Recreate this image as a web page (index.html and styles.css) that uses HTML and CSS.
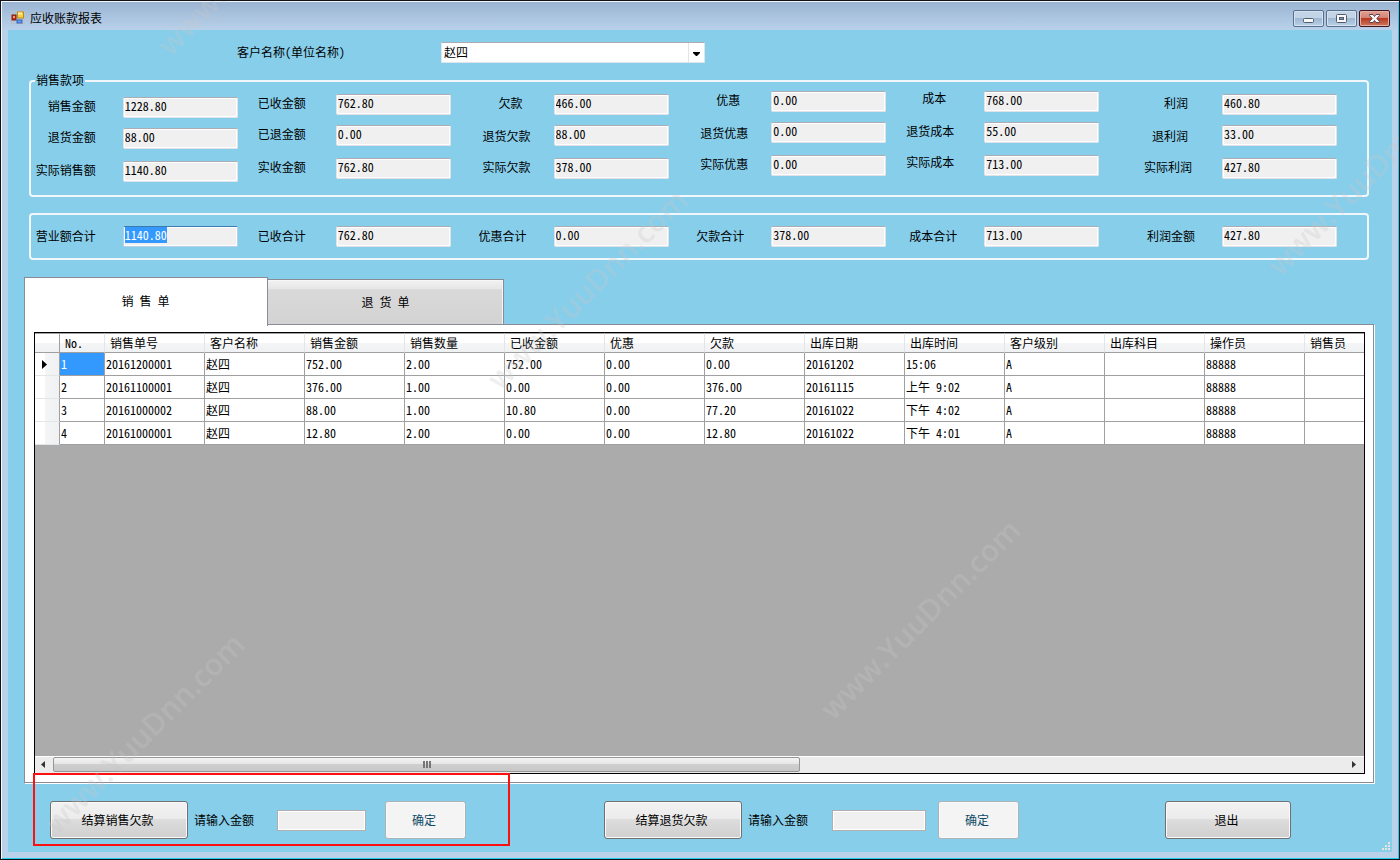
FILE: index.html
```html
<!DOCTYPE html>
<html lang="zh-CN">
<head>
<meta charset="utf-8">
<title>应收账款报表</title>
<link rel="stylesheet" href="styles.css">
</head>
<body>
<div class="window">
  <header class="titlebar">
    <svg class="app-icon" width="14" height="14" viewBox="0 0 14 14" aria-hidden="true">
      <rect x="0.5" y="0.5" width="13" height="12" fill="none" stroke="#b9c2cb"/>
      <rect x="6.500" y="1" width="6" height="6" fill="#f7d046" stroke="#c08a10"/>
      <rect x="7" y="1.500" width="4" height="2" fill="#fdf0a8"/>
      <rect x="1" y="4" width="4" height="5" fill="#b8341c" stroke="#8a1a08"/>
      <rect x="2" y="5" width="2" height="2" fill="#ef9a80"/>
      <rect x="6" y="9" width="5" height="3" fill="#6d9bea" stroke="#3562b8"/>
    </svg>
    <h1 class="title">应收账款报表</h1>
    <div class="window-buttons">
      <button class="winbtn" type="button" aria-label="最小化">
        <svg width="29" height="15" viewBox="0 0 29 15"><rect x="9.500" y="7.500" width="10" height="4" rx="1" fill="#f6f8fa" stroke="#535c68"/></svg>
      </button>
      <button class="winbtn" type="button" aria-label="最大化">
        <svg width="29" height="15" viewBox="0 0 29 15"><rect x="9.500" y="3.500" width="10" height="8" rx="1" fill="#f6f8fa" stroke="#535c68"/><rect x="12.500" y="6.500" width="4" height="2" fill="#7d97b4" stroke="#535c68"/></svg>
      </button>
      <button class="winbtn winbtn-close" type="button" aria-label="关闭">
        <svg width="29" height="15" viewBox="0 0 29 15"><path d="M9.500 3.500h3.500l1.500 2 1.500-2h3.500v1l-2.700 3 2.700 3v1H16l-1.500-2-1.500 2H9.500v-1l2.700-3-2.700-3z" fill="#f6f6f6" stroke="#5a4450"/></svg>
      </button>
    </div>
  </header>

  <main class="client">
    <div class="filter">
      <label for="customer">客户名称(单位名称)</label>
      <div class="combo">
        <select id="customer"><option>赵四</option></select>
        <span class="combo-arrow"><svg width="7" height="4" viewBox="0 0 7 4"><path d="M0 0h7v1L4 4H3L0 1z" fill="#000"/></svg></span>
      </div>
    </div>

    <fieldset class="group">
      <legend>销售款项</legend>
      <div class="columns">
        <div class="column drop-2">
          <label for="a1">销售金额</label><input id="a1" value="1228.80" readonly>
          <label for="a2">退货金额</label><input id="a2" value="88.00" readonly>
          <label for="a3">实际销售额</label><input id="a3" value="1140.80" readonly>
        </div>
        <div class="column drop-1 gap-wide">
          <label for="b1">已收金额</label><input id="b1" value="762.80" readonly>
          <label for="b2">已退金额</label><input id="b2" value="0.00" readonly>
          <label for="b3">实收金额</label><input id="b3" value="762.80" readonly>
        </div>
        <div class="column drop-1 gap-narrow low-middle">
          <label class="short" for="c1">欠款</label><input id="c1" value="466.00" readonly>
          <label class="middle" for="c2">退货欠款</label><input id="c2" value="88.00" readonly>
          <label for="c3">实际欠款</label><input id="c3" value="378.00" readonly>
        </div>
        <div class="column gap-narrow low-middle">
          <label class="short" for="d1">优惠</label><input id="d1" value="0.00" readonly>
          <label class="middle" for="d2">退货优惠</label><input id="d2" value="0.00" readonly>
          <label for="d3">实际优惠</label><input id="d3" value="0.00" readonly>
        </div>
        <div class="column gap-wide high">
          <label class="short" for="e1">成本</label><input id="e1" value="768.00" readonly>
          <label class="middle" for="e2">退货成本</label><input id="e2" value="55.00" readonly>
          <label for="e3">实际成本</label><input id="e3" value="713.00" readonly>
        </div>
        <div class="column drop-1 gap-wide low-middle">
          <label class="inset" for="f1">利润</label><input id="f1" value="460.80" readonly>
          <label class="middle inset" for="f2">退利润</label><input id="f2" value="33.00" readonly>
          <label for="f3">实际利润</label><input id="f3" value="427.80" readonly>
        </div>
      </div>
    </fieldset>

    <fieldset class="group group-total" aria-label="合计">
      <div class="columns">
        <div class="column"><label for="t1">营业额合计</label><input id="t1" class="current" value="1140.80" readonly></div>
        <div class="column gap-wide"><label for="t2">已收合计</label><input id="t2" value="762.80" readonly></div>
        <div class="column"><label for="t3">优惠合计</label><input id="t3" value="0.00" readonly></div>
        <div class="column"><label for="t4">欠款合计</label><input id="t4" value="378.00" readonly></div>
        <div class="column"><label for="t5">成本合计</label><input id="t5" value="713.00" readonly></div>
        <div class="column"><label for="t6">利润金额</label><input id="t6" value="427.80" readonly></div>
      </div>
    </fieldset>

    <section class="tabs">
      <div class="tablist" role="tablist">
        <button class="tab tab-active" type="button" role="tab" aria-selected="true">销 售 单</button>
        <button class="tab" type="button" role="tab" aria-selected="false">退 货 单</button>
      </div>
      <div class="panel" role="tabpanel">
        <div class="datagrid">
          <div class="viewport">
            <table>
              <colgroup><col class="c-mark"><col class="c-no"><col span="13"></colgroup>
              <thead>
                <tr><th></th><th>No.</th><th>销售单号</th><th>客户名称</th><th>销售金额</th><th>销售数量</th><th>已收金额</th><th>优惠</th><th>欠款</th><th>出库日期</th><th>出库时间</th><th>客户级别</th><th>出库科目</th><th>操作员</th><th>销售员</th></tr>
              </thead>
              <tbody>
                <tr><th><svg width="5" height="9" viewBox="0 0 5 9"><path d="M0 0l5 4.500L0 9z" fill="#000"/></svg></th><td class="selected">1</td><td>20161200001</td><td>赵四</td><td>752.00</td><td>2.00</td><td>752.00</td><td>0.00</td><td>0.00</td><td>20161202</td><td>15:06</td><td>A</td><td></td><td>88888</td><td></td></tr>
                <tr><th></th><td>2</td><td>20161100001</td><td>赵四</td><td>376.00</td><td>1.00</td><td>0.00</td><td>0.00</td><td>376.00</td><td>20161115</td><td>上午 9:02</td><td>A</td><td></td><td>88888</td><td></td></tr>
                <tr><th></th><td>3</td><td>20161000002</td><td>赵四</td><td>88.00</td><td>1.00</td><td>10.80</td><td>0.00</td><td>77.20</td><td>20161022</td><td>下午 4:02</td><td>A</td><td></td><td>88888</td><td></td></tr>
                <tr><th></th><td>4</td><td>20161000001</td><td>赵四</td><td>12.80</td><td>2.00</td><td>0.00</td><td>0.00</td><td>12.80</td><td>20161022</td><td>下午 4:01</td><td>A</td><td></td><td>88888</td><td></td></tr>
              </tbody>
            </table>
          </div>
          <div class="scrollbar">
            <button class="scroll-arrow" type="button" aria-label="向左滚动"><svg width="4" height="7" viewBox="0 0 4 7"><path d="M4 0v7L0 3.500z" fill="#333"/></svg></button>
            <div class="track"><div class="thumb"><i></i><i></i><i></i></div></div>
            <button class="scroll-arrow" type="button" aria-label="向右滚动"><svg width="4" height="7" viewBox="0 0 4 7"><path d="M0 0v7l4-3.500z" fill="#333"/></svg></button>
          </div>
        </div>
      </div>
    </section>

    <footer class="actions">
      <div class="settle">
        <button class="btn btn-settle" type="button">结算销售欠款</button>
        <label for="pay1">请输入金额</label>
        <input id="pay1" class="amount" disabled>
        <button class="btn btn-ok" type="button" disabled>确定</button>
      </div>
      <div class="settle">
        <button class="btn btn-settle" type="button">结算退货欠款</button>
        <label for="pay2">请输入金额</label>
        <input id="pay2" class="amount amount-wide" disabled>
        <button class="btn btn-ok btn-near" type="button" disabled>确定</button>
      </div>
      <div class="settle"><button class="btn btn-exit" type="button">退出</button></div>
    </footer>
    <svg class="grip" width="9" height="9" viewBox="0 0 9 9" aria-hidden="true"><path d="M6 0h2v2H6zM3 3h2v2H3zM6 3h2v2H6zM0 6h2v2H0zM3 6h2v2H3zM6 6h2v2H6z" fill="#e8e4df"/></svg>
  </main>

  <div class="callout"></div>
  <span class="mark mark-1">www.YuuDnn.com</span>
  <span class="mark mark-2">www.YuuDnn.com</span>
  <span class="mark mark-3">www.YuuDnn.com</span>
  <span class="mark mark-4">www.YuuDnn.com</span>
  <span class="mark mark-5">www.YuuDnn.com</span>
</div>
<script src="main.js"></script>
</body>
</html>
```
FILE: styles.css
```css
* {
  box-sizing: border-box;
}

body,
button,
input,
select {
  margin: 0;
  font-family: "Noto Sans Mono CJK SC", "Noto Sans CJK SC", sans-serif;
  font-feature-settings: "hwid";
  font-size: 12px;
  line-height: 18px;
  color: #000;
}

.window {
  position: relative;
  display: flex;
  flex-direction: column;
  min-height: 100vh;
  overflow: hidden;
  border: 1px solid #101418;
  background: #bad1ea;
  box-shadow: inset 1px 1px 0 #f4f8fc, inset -1px -1px 0 #22ccee;
}

/* Title bar */
.titlebar {
  display: flex;
  align-items: center;
  height: 29px;
  margin: 0 1px;
  padding: 4px 8px 0 9px;
  background: linear-gradient(#9ab4d2, #b9d1ea);
  border-top: 1px solid #f4f8fc;
}

.title {
  flex: 1;
  margin: 0 0 0 5px;
  font-size: 12px;
  font-weight: 400;
}

.window-buttons {
  display: flex;
  gap: 2px;
}

.winbtn {
  width: 31px;
  height: 17px;
  padding: 0;
  border: 1px solid #5a6f8c;
  border-radius: 2px;
  background: linear-gradient(#c3d4e7 50%, #9fb8d3 50%, #b9d0e8);
  box-shadow: inset 0 0 0 1px #d5e3f1;
}

.winbtn-close {
  border-color: #43141c;
  background: linear-gradient(#e0a094, #d3806f 50%, #b83a20 50%, #cf7760);
  box-shadow: inset 0 0 0 1px #e3b0a6;
}

.winbtn svg {
  display: block;
}

/* Client area */
.client {
  position: relative;
  flex: 1;
  display: flex;
  flex-direction: column;
  margin: 0 7px 7px;
  padding: 12px 16px 13px;
  background: #87ceeb;
}

.filter {
  display: flex;
  align-items: center;
  gap: 96px;
  padding-left: 213px;
}

.filter label {
  padding-bottom: 2px;
}

.combo {
  position: relative;
  width: 264px;
}

.combo select {
  display: block;
  width: 100%;
  height: 21px;
  padding: 0 18px 3px 2px;
  appearance: none;
  border: 1px solid #dfe5ea;
  border-top-color: #abadb3;
  border-radius: 1px;
  background: #fff;
}

.combo-arrow {
  position: absolute;
  top: 1px;
  right: 1px;
  bottom: 1px;
  display: flex;
  align-items: center;
  justify-content: center;
  width: 16px;
  padding-top: 2px;
  border-left: 1px solid #dfe5ea;
  pointer-events: none;
}

/* Framed groups */
.group {
  min-width: 0;
  margin: 8px 7px 0 5px;
  padding: 0 30px 13px 0;
  border: 2px solid #f1f7fa;
  border-radius: 4px;
}

.group legend {
  margin-left: 4px;
  padding: 0 1px 2px;
  line-height: 18px;
}

.group-total {
  margin-top: 16px;
  padding: 11px 30px 11px 0;
}

.columns {
  display: grid;
  grid-template-columns: 207fr 213fr 218fr 218fr 213fr 238fr;
}

.column {
  display: grid;
  grid-template-columns: auto 115px;
  grid-template-rows: 31px 33px 21px;
  column-gap: 27px;
  align-items: start;
  justify-content: end;
  text-align: right;
}

.group-total .column {
  grid-template-rows: 21px;
}

.group-total label {
  line-height: 20px;
}

.drop-1 {
  padding-top: 3px;
}

.drop-2 {
  padding-top: 6px;
}

.gap-wide {
  column-gap: 30px;
}

.gap-narrow {
  column-gap: 23px;
}

.high label {
  line-height: 14px;
}

.low-middle .middle {
  line-height: 22px;
}

.high .middle {
  line-height: 18px;
}

.short {
  padding-right: 8px;
}

.inset {
  padding-right: 4px;
}

input {
  height: 21px;
  width: 100%;
  padding: 0 1px 4px;
  border: 1px solid #dfe3e8;
  border-top-color: #abadb3;
  border-radius: 2px;
  outline: none;
  background: #f0f0f0;
  box-shadow: inset 0 0 0 1px #fff;
}

.current {
  border-color: #b5cfe7;
  border-top-color: #3d7bad;
}

input::selection {
  color: #fff;
  background: #3399ff;
}

/* Tabs */
.tabs {
  flex: 1;
  display: flex;
  flex-direction: column;
  margin: 17px 2px 0 0;
}

.tablist {
  display: flex;
  align-items: flex-end;
}

.tab {
  width: 236px;
  height: 46px;
  padding: 0 0 1px;
  border: 1px solid #898c95;
  border-left: 0;
  background: linear-gradient(#f2f2f2, #e6e6e6 20%, #d9d9d9 22%, #d3d3d3);
  box-shadow: inset -1px 1px 0 #f6f6f6;
}

.tab-active {
  position: relative;
  z-index: 1;
  width: 244px;
  height: 49px;
  margin-bottom: -1px;
  padding: 0 1px 2px 0;
  border: 1px solid #898c95;
  border-bottom: 0;
  background: #fff;
  box-shadow: none;
}

.panel {
  flex: 1;
  display: flex;
  margin-top: -1px;
  padding: 7px 8px 8px 9px;
  border: 1px solid #898c95;
  background: #fff;
  box-shadow: 1px 1px 0 #fff;
}

.datagrid {
  flex: 1;
  display: flex;
  flex-direction: column;
  min-width: 0;
  border: 1px solid #000;
  background: #ababab;
}

.viewport {
  flex: 1;
  width: 0;
  min-width: 100%;
  overflow: hidden;
}

table {
  width: 1369px;
  table-layout: fixed;
  border-spacing: 0;
  background: #fff;
}

col {
  width: 100px;
}

.c-mark {
  width: 25px;
}

.c-no {
  width: 45px;
}

th,
td {
  height: 23px;
  padding: 0 1px;
  border-right: 1px solid #a0a0a0;
  border-bottom: 1px solid #a0a0a0;
  font-weight: 400;
  text-align: left;
  white-space: nowrap;
}

thead th {
  height: 20px;
  padding: 0 5px;
  border-top: 1px solid #a0a0a0;
  border-right-color: #e3e5e8;
  background: linear-gradient(#fff 50%, #f4f5f7 50%, #f0f1f3);
}

tbody th {
  padding: 0 7px;
  border-bottom-color: #e3e5e8;
  background: linear-gradient(90deg, #fff 40%, #f4f5f7 40%, #f0f1f3);
}

thead th:first-child,
tbody th:first-child {
  border-right-color: #a0a0a0;
}

tbody th svg {
  display: block;
}

.selected {
  color: #fff;
  background: #3399ff;
}

/* Scroll bar */
.scrollbar {
  display: flex;
  height: 17px;
  border-top: 1px solid #fff;
  background: #ececec;
}

.scroll-arrow {
  display: flex;
  align-items: center;
  justify-content: center;
  width: 18px;
  padding: 0 2px 1px 0;
  border: 0;
  background: none;
}

.track {
  flex: 1;
}

.thumb {
  display: flex;
  align-items: center;
  justify-content: center;
  gap: 1px;
  width: 57.8%;
  height: 15px;
  border: 1px solid #979797;
  border-radius: 2px;
  background: linear-gradient(#f4f4f4, #e4e4e4 50%, #cfcfcf 50%, #c8c8c8);
}

.thumb i {
  width: 2px;
  height: 7px;
  border-left: 2px solid #777;
}

/* Bottom actions */
.actions {
  display: grid;
  grid-template-columns: 554fr 561fr 211fr;
  margin-left: 26px;
  padding-top: 18px;
}

.settle {
  display: flex;
  align-items: center;
}

.btn {
  height: 38px;
  padding: 0 3px 0 0;
  border: 1px solid #707070;
  border-radius: 3px;
  background: linear-gradient(#f2f2f2, #ebebeb 48%, #dddddd 48%, #cfcfcf);
  box-shadow: inset 0 0 0 1px #fafafa;
}

.btn-settle {
  width: 138px;
  margin-right: 6px;
}

.btn-exit {
  width: 126px;
}

.btn-ok {
  width: 81px;
  margin-left: 19px;
  border-color: #adb2b5;
  background: #f4f4f4;
  color: #0e4a66;
}

.btn-near {
  margin-left: 12px;
}

.amount {
  width: 89px;
  margin-left: 23px;
  border-color: #afafaf;
  border-radius: 0;
}

.amount-wide {
  width: 94px;
  margin-left: 24px;
}

.grip {
  position: absolute;
  right: 1px;
  bottom: 1px;
}

/* Overlays */
.callout {
  position: absolute;
  left: 32px;
  top: 772px;
  width: 477px;
  height: 73px;
  border: 2px solid #ff1010;
  pointer-events: none;
}

.mark {
  position: absolute;
  width: 300px;
  height: 40px;
  margin: -20px 0 0 -150px;
  font: 600 30px/40px "Open Sans", sans-serif;
  text-align: center;
  color: #c8c8c8;
  opacity: 0.28;
  transform: rotate(-45deg);
  pointer-events: none;
}

.mark-1 {
  left: 143px;
  top: 732px;
}

.mark-2 {
  left: 586px;
  top: 288px;
}

.mark-3 {
  left: 919px;
  top: 618px;
}

.mark-4 {
  left: 1366px;
  top: 174px;
}

.mark-5 {
  left: 256px;
  top: -46px;
}
```
FILE: main.js
```js
const current = document.getElementById("t1");
current.focus();
current.select();
```
